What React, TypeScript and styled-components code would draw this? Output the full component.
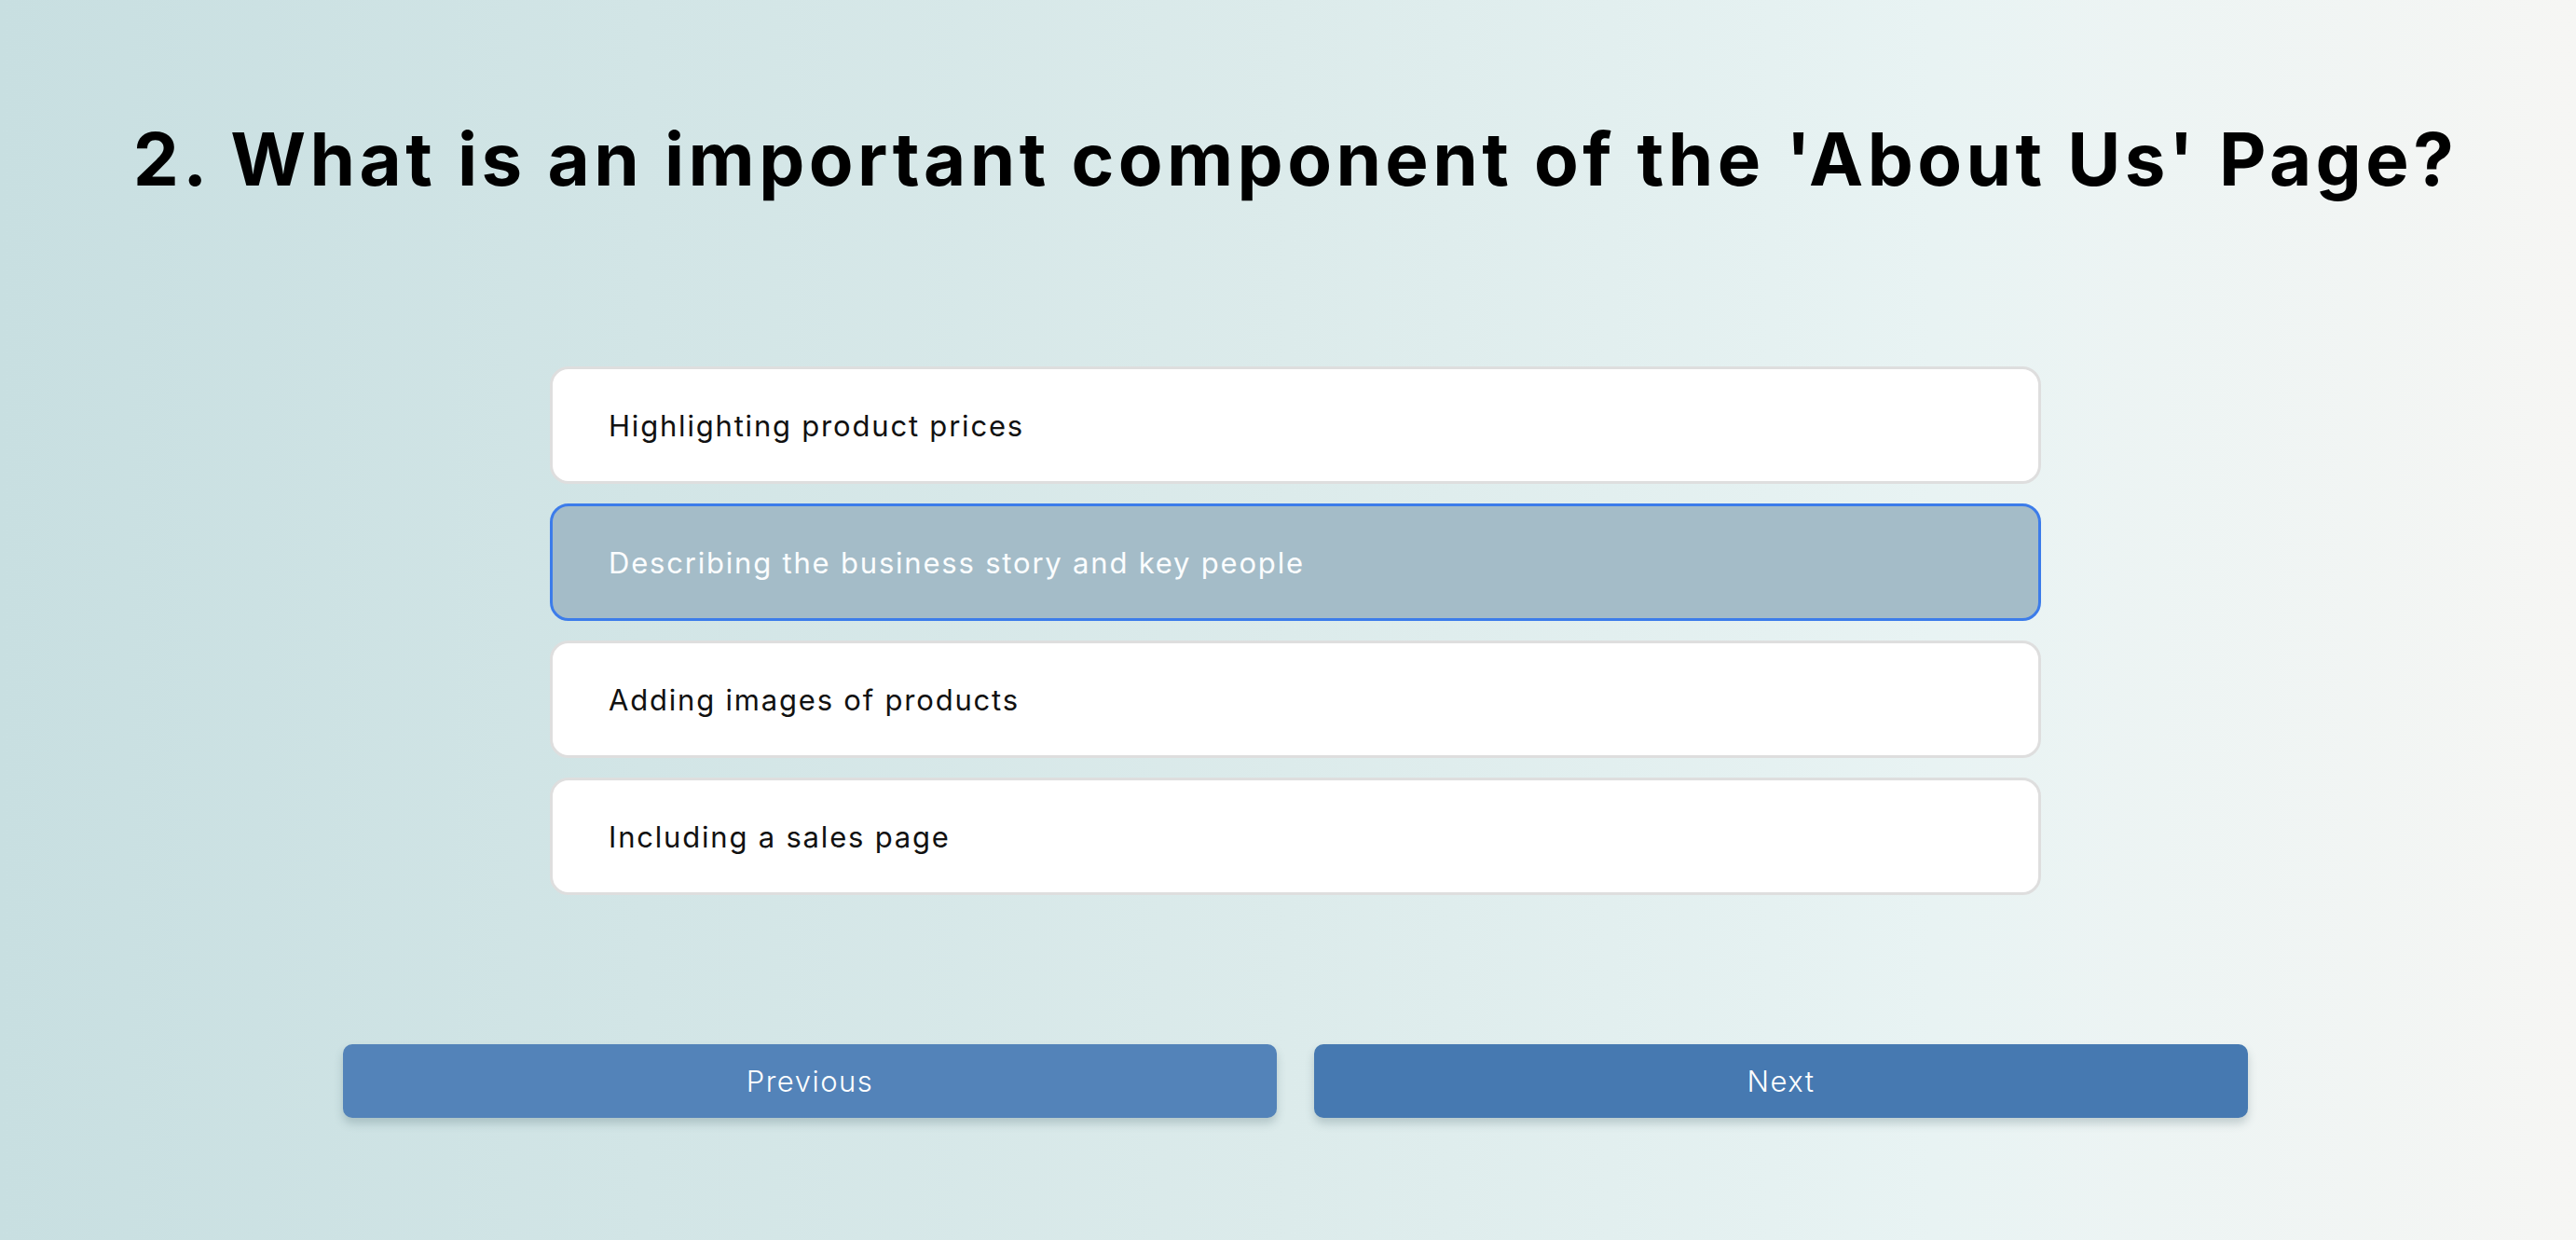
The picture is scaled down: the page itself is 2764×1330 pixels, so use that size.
import React, { useState } from 'react';
import styled, { createGlobalStyle } from 'styled-components';

const GlobalStyle = createGlobalStyle`
  html, body {
    margin: 0;
    padding: 0;
  }
  body {
    font-family: Inter, 'Open Sans', sans-serif;
  }
`;

const OPTIONS = [
  'Highlighting product prices',
  'Describing the business story and key people',
  'Adding images of products',
  'Including a sales page',
];

const Page = styled.div`
  min-height: 1330px;
  box-sizing: border-box;
  padding: 0 0 0 16px;
  background: linear-gradient(to right, #c8dfe1 0%, #dcebeb 50%, #e8f3f3 75%, #f6f6f4 100%);
  display: flex;
  flex-direction: column;
  align-items: center;
`;

const Title = styled.h1`
  margin: 123px 0 0;
  font-family: Inter, sans-serif;
  font-size: 78px;
  line-height: 96px;
  font-weight: 700;
  letter-spacing: 4.4px;
  color: #000;
  text-align: center;
  white-space: nowrap;
`;

const OptionList = styled.ul`
  list-style: none;
  margin: 174px 0 0;
  padding: 0;
  width: 1600px;
  display: flex;
  flex-direction: column;
  gap: 21px;
`;

const Option = styled.li<{ $selected: boolean }>`
  box-sizing: border-box;
  height: 126px;
  display: flex;
  align-items: center;
  padding: 0 60px;
  border-radius: 20px;
  border: 3px solid ${p => (p.$selected ? '#3c7cea' : '#dedede')};
  background: ${p => (p.$selected ? '#a4bcc8' : '#ffffff')};
  color: ${p => (p.$selected ? '#fbfdfe' : '#111')};
  font-family: Inter, sans-serif;
  font-size: 31px;
  font-weight: 400;
  letter-spacing: 1.8px;
  cursor: pointer;
`;

const ButtonRow = styled.div`
  margin-top: 160px;
  width: 2044px;
  display: flex;
  gap: 40px;
`;

const NavButton = styled.button<{ $tone: string }>`
  flex: 1;
  height: 79px;
  border: none;
  border-radius: 10px;
  background: ${p => p.$tone};
  color: #fff;
  font-family: Inter, sans-serif;
  font-size: 31px;
  font-weight: 300;
  letter-spacing: 1.5px;
  box-shadow: 0 6px 10px rgba(60, 90, 100, 0.25);
  cursor: pointer;
`;

export default function App() {
  const [selected, setSelected] = useState(1);
  return (
    <Page>
      <GlobalStyle />
      <Title>2. What is an important component of the 'About Us' Page?</Title>
      <OptionList>
        {OPTIONS.map((opt, i) => (
          <Option key={opt} $selected={i === selected} onClick={() => setSelected(i)}>
            {opt}
          </Option>
        ))}
      </OptionList>
      <ButtonRow>
        <NavButton $tone="#5383b9">Previous</NavButton>
        <NavButton $tone="#4679b1">Next</NavButton>
      </ButtonRow>
    </Page>
  );
}
